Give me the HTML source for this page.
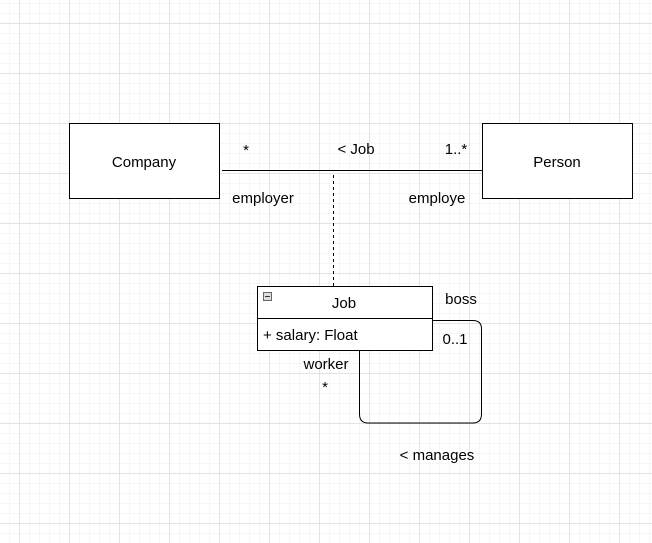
<!DOCTYPE html>
<html><head><style>
body{margin:0;width:652px;height:543px;overflow:hidden;background:#fff;font-family:"Liberation Sans",Arial,sans-serif;}
svg{position:absolute;left:0;top:0}
</style></head><body>
<svg width="652" height="543" xmlns="http://www.w3.org/2000/svg">
<defs>
<pattern id="mi" width="10" height="10" patternUnits="userSpaceOnUse" x="9.5" y="3.5">
<path d="M10 0V10M0 10H10" stroke="#eeeeee" stroke-width="1" fill="none"/>
</pattern>
<pattern id="ma" width="50" height="50" patternUnits="userSpaceOnUse" x="19.5" y="23.5">
<path d="M0 0V50M0 0H50" stroke="#d8d8d8" stroke-width="1" fill="none"/>
</pattern>
</defs>
<rect width="652" height="543" fill="url(#mi)"/>
<rect width="652" height="543" fill="url(#ma)"/>
<g font-size="15" fill="#000" stroke="none">
<rect x="69.5" y="123.5" width="150" height="75" fill="#fff" stroke="#000"/>
<text x="144" y="167" text-anchor="middle">Company</text>
<rect x="482.5" y="123.5" width="150" height="75" fill="#fff" stroke="#000"/>
<text x="557" y="167" text-anchor="middle">Person</text>
<line x1="222" y1="170.5" x2="482" y2="170.5" stroke="#000"/>
<line x1="333.5" y1="175" x2="333.5" y2="287" stroke="#000" stroke-dasharray="3,3"/>
<text x="246" y="155" text-anchor="middle">*</text>
<text x="356" y="154" text-anchor="middle">&lt; Job</text>
<text x="456" y="154" text-anchor="middle">1..*</text>
<text x="263" y="203" text-anchor="middle">employer</text>
<text x="437" y="203" text-anchor="middle">employe</text>
<path d="M359.5 351V414Q359.5 423 368 423H473Q481.5 423 481.5 414V329Q481.5 320.5 473 320.5H432" fill="none" stroke="#000"/>
<rect x="257.5" y="286.5" width="175" height="64" fill="#fff" stroke="#000"/>
<line x1="257.5" y1="318.5" x2="432.5" y2="318.5" stroke="#000"/>
<rect x="263.5" y="292.5" width="8" height="8" fill="#ddd" stroke="#666"/>
<line x1="265" y1="296.5" x2="270" y2="296.5" stroke="#333"/>
<text x="344" y="308" text-anchor="middle">Job</text>
<text x="263" y="340">+ salary: Float</text>
<text x="461" y="304" text-anchor="middle">boss</text>
<text x="455" y="344" text-anchor="middle">0..1</text>
<text x="326" y="369" text-anchor="middle">worker</text>
<text x="325" y="392" text-anchor="middle">*</text>
<text x="437" y="460" text-anchor="middle">&lt; manages</text>
</g>
</svg>
</body></html>
